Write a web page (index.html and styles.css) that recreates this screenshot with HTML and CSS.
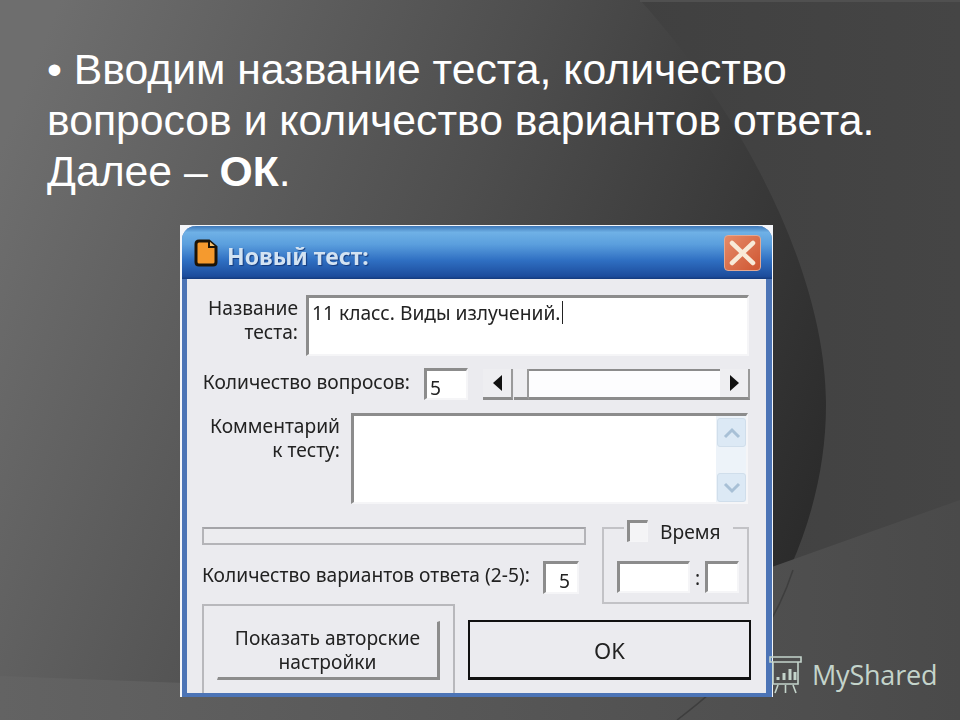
FILE: index.html
```html
<!DOCTYPE html>
<html lang="ru">
<head>
    <meta charset="UTF-8">
    <title>Новый тест</title>
    <link rel="stylesheet" href="styles.css">
</head>
<body>
    <div class="slide">
        <!-- фон слайда -->
        <svg class="slide-bg" width="960" height="720" viewBox="0 0 960 720">
            <defs>
                <linearGradient id="bg-left" gradientUnits="userSpaceOnUse" x1="0" y1="150" x2="830" y2="480">
                    <stop offset="0" stop-color="#6e6e6e"/>
                    <stop offset="0.5" stop-color="#4e4e4e"/>
                    <stop offset="1" stop-color="#2b2b2b"/>
                </linearGradient>
                <linearGradient id="bg-right" x1="0" y1="0" x2="1" y2="0">
                    <stop offset="0" stop-color="#373737"/>
                    <stop offset="1" stop-color="#454545"/>
                </linearGradient>
                <linearGradient id="bg-low" x1="0" y1="0" x2="1" y2="0">
                    <stop offset="0" stop-color="#636363"/>
                    <stop offset="1" stop-color="#4a4a4a"/>
                </linearGradient>
            </defs>
            <rect width="960" height="720" fill="url(#bg-right)"/>
            <path d="M640 0C740 110 825 270 826 402C827 520 770 640 677 720H0V0Z" fill="url(#bg-left)"/>
            <path d="M0 676L420 692L960 500V720H0Z" fill="url(#bg-low)"/>
            <path d="M793 570C770 640 730 680 677 720" fill="none" stroke="#3e3e3e" stroke-width="1.5"/>
            <rect x="640" width="320" height="2" fill="#505050"/>
        </svg>

        <p class="slide-text">• Вводим название теста, количество<br>вопросов и количество вариантов ответа.<br>Далее – <b>ОК</b>.</p>

        <div class="shot">
            <div class="window">
                <div class="titlebar">
                    <svg class="doc-icon" width="24" height="28" viewBox="0 0 24 28">
                        <path d="M5 2H15L22 8V23Q22 26 19 26H5Q2 26 2 23V5Q2 2 5 2Z" fill="#f59a2e" stroke="#1c1408" stroke-width="3"/>
                        <path d="M15 2V8H22" fill="#f8c26e" stroke="#1c1408" stroke-width="2"/>
                    </svg>
                    <span class="title">Новый тест:</span>
                    <div class="close-btn">
                        <svg width="27" height="26" viewBox="0 0 27 26">
                            <path d="M3 3L24 23M24 3L3 23" stroke="#f8ead8" stroke-width="4.5" stroke-linecap="round"/>
                        </svg>
                    </div>
                </div>

                <div class="client">
                    <div class="row row-name">
                        <label class="label label-name">Название<br>теста:</label>
                        <div class="field field-name">11 класс. Виды излучений.<span class="caret"></span></div>
                    </div>

                    <div class="row row-count">
                        <label class="label label-count">Количество вопросов:</label>
                        <div class="field field-count">5</div>
                        <div class="hscroll">
                            <div class="hscroll-btn"><span class="arrow-left"></span></div>
                            <div class="hscroll-thumb"></div>
                            <div class="hscroll-track"></div>
                            <div class="hscroll-btn"><span class="arrow-right"></span></div>
                        </div>
                    </div>

                    <div class="row row-comment">
                        <label class="label label-comment">Комментарий<br>к тесту:</label>
                        <div class="field field-comment">
                            <div class="vscroll">
                                <div class="vscroll-btn">
                                    <svg width="20" height="12" viewBox="0 0 20 12"><path d="M3 10L10 3L17 10" fill="none" stroke="#a8c0d6" stroke-width="3"/></svg>
                                </div>
                                <div class="vscroll-btn">
                                    <svg width="20" height="12" viewBox="0 0 20 12"><path d="M3 2L10 9L17 2" fill="none" stroke="#a8c0d6" stroke-width="3"/></svg>
                                </div>
                            </div>
                        </div>
                    </div>

                    <div class="row row-options">
                        <div class="options-left">
                            <div class="progress"></div>
                            <div class="row-variants">
                                <label class="label label-variants">Количество вариантов ответа (2-5):</label>
                                <div class="field field-variants">5</div>
                            </div>
                        </div>
                        <fieldset class="time-group">
                            <legend class="time-legend"><span class="checkbox"></span><span class="time-caption">Время</span></legend>
                            <div class="time-fields">
                                <div class="field field-hours"></div>
                                <span class="colon">:</span>
                                <div class="field field-minutes"></div>
                            </div>
                        </fieldset>
                    </div>

                    <div class="row row-bottom">
                        <div class="author-group">
                            <button class="btn btn-author">Показать авторские настройки</button>
                        </div>
                        <button class="btn btn-ok">OK</button>
                    </div>
                </div>
            </div>
        </div>

        <div class="watermark">
            <svg width="36" height="40" viewBox="0 0 36 40" fill="none" stroke="#c4d4cb" stroke-width="1.6">
                <path d="M2 3H33V8H2ZM5 8V30H30V8"/>
                <path d="M10 31L7 39M17.500 31V39M25 31L28 39"/>
                <path d="M10 26V23M16 26V19M22 26V15M27 26V18" stroke-width="3"/>
            </svg>
            <span>MyShared</span>
        </div>
    </div>
</body>
</html>
```

FILE: styles.css
```css
body { margin: 0; overflow: hidden; font-family: "Liberation Sans", Arial, sans-serif; }

.slide {
    position: relative;
    width: 960px;
    height: 720px;
    overflow: hidden;
    background-color: #4a4a4a;
}

.slide-bg {
    position: absolute;
    top: 0;
    left: 0;
}

.slide-text {
    position: relative;
    margin: 0;
    padding: 44px 0 0 47px;
    height: 149px;
    color: white;
    font-size: 42.7px;
    line-height: 51px;
    white-space: nowrap;
}

/* скриншот окна */
.shot {
    position: relative;
    width: 593px;
    height: 472px;
    box-sizing: border-box;
    margin: 32px 0 0 180px;
    padding: 1px 1px 0 2px;
    background-color: #f4f6fa;
    filter: blur(0.4px);
}

.window {
    height: 100%;
    box-sizing: border-box;
    display: flex;
    flex-direction: column;
    border: solid #4c74b6;
    border-width: 0 6px 4px 5px;
    border-radius: 14px 14px 0 0;
    font-family: "Noto Sans", "Liberation Sans", sans-serif;
    font-size: 19.2px;
    color: #222;
    background-color: #ebebef;
}

.titlebar {
    height: 53px;
    margin: 0 -6px 0 -5px;
    padding: 0 11px 0 12px;
    flex-shrink: 0;
    display: flex;
    align-items: center;
    border-radius: 14px 14px 0 0;
    background: linear-gradient(#3f78b8 0, #6fb1e6 12%, #5a9edd 35%, #2f6fc2 65%, #1c4c9c 95%, #143a7c 100%);
}

.doc-icon {
    flex-shrink: 0;
}

.title {
    margin: 6px 0 0 9px;
    font-weight: bold;
    font-size: 23px;
    color: #d3e3f2;
    text-shadow: 1px 1px 1px #143a7c;
}

.close-btn {
    width: 37px;
    height: 36px;
    box-sizing: border-box;
    margin-left: auto;
    display: flex;
    align-items: center;
    justify-content: center;
    border: 1px solid #e2a892;
    border-radius: 4px;
    background: linear-gradient(135deg, #e58a68, #cf5632);
}

.client {
    flex: 1;
    padding: 16px 15px 0;
    display: flex;
    flex-direction: column;
}

.row {
    display: flex;
    flex-shrink: 0;
}

.label {
    flex-shrink: 0;
    line-height: 24px;
    text-align: right;
    white-space: nowrap;
}

.field {
    position: relative;
    box-sizing: border-box;
    flex-shrink: 0;
    padding-left: 3px;
    background-color: white;
    border: solid #f5f5f7;
    border-width: 3px 2px 2px 3px;
    border-top-color: #8c8c8c;
    border-left-color: #8c8c8c;
}

.label-name {
    width: 96px;
    padding-top: 1px;
}

.field-name {
    width: 443px;
    height: 61px;
    margin-left: 8px;
    line-height: 29px;
}

.caret {
    display: inline-block;
    width: 1px;
    height: 23px;
    margin-left: 2px;
    vertical-align: -4px;
    background-color: #222;
}

.row-count {
    margin-top: 12px;
    align-items: center;
}

.label-count {
    width: 208px;
    padding-bottom: 4px;
}

.field-count {
    width: 44px;
    height: 32px;
    margin-left: 14px;
    line-height: 33px;
}

.hscroll {
    display: flex;
    width: 267px;
    height: 31px;
    margin-left: 15px;
}

.hscroll-btn {
    width: 30px;
    box-sizing: border-box;
    display: flex;
    align-items: center;
    justify-content: center;
    background-color: #eeeef1;
    border-right: 2px solid #9a9a9a;
    border-bottom: 3px solid #8c8c8c;
}

.arrow-left {
    border: solid transparent;
    border-width: 8px 9px 8px 0;
    border-right-color: #111;
}

.arrow-right {
    border: solid transparent;
    border-width: 8px 0 8px 9px;
    border-left-color: #111;
}

.hscroll-thumb {
    width: 15px;
    box-sizing: border-box;
    margin-left: 1px;
    background-color: #eeeef1;
    border-right: 2px solid #9a9a9a;
    border-bottom: 3px solid #8c8c8c;
}

.hscroll-track {
    flex: 1;
    background-color: #fdfdfe;
    border-top: 2px solid #8c8c8c;
    border-bottom: 3px solid #8c8c8c;
}

.row-comment { margin-top: 13px; }

.label-comment {
    width: 138px;
    padding-top: 1px;
}

.field-comment {
    width: 397px;
    height: 91px;
    margin-left: 11px;
    padding-left: 0;
    display: flex;
    justify-content: flex-end;
}

.vscroll {
    width: 30px;
    display: flex;
    flex-direction: column;
    justify-content: space-between;
    padding: 2px 0 0 1px;
    box-sizing: border-box;
    background-color: #edf3f9;
}

.vscroll-btn {
    height: 27px;
    display: flex;
    align-items: center;
    justify-content: center;
    border-radius: 3px;
    background-color: #dce9f5;
    border: 1px solid #d0deeb;
}

.row-options {
    margin-top: 12px;
    height: 88px;
}

.options-left {
    width: 384px;
    padding-top: 11px;
}

.progress {
    height: 18px;
    box-sizing: border-box;
    background-color: #ececef;
    border: 2px solid #b4b4b8;
    border-top-color: #a4a4a8;
}

.row-variants {
    display: flex;
    align-items: center;
    margin-top: 16px;
}

.label-variants {
    width: 333px;
    padding-bottom: 5px;
    text-align: left;
}

.field-variants {
    width: 36px;
    height: 33px;
    margin-left: 8px;
    padding-left: 13px;
    line-height: 34px;
}

.time-group {
    width: 147px;
    height: 88px;
    box-sizing: border-box;
    margin: 0 0 0 16px;
    padding: 21px 0 0 13px;
    border: 2px solid #c2c2c6;
}

.time-legend {
    display: flex;
    align-items: center;
    height: 24px;
    margin-left: 7px;
    padding: 0 12px 0 3px;
}

.checkbox {
    width: 21px;
    height: 22px;
    box-sizing: border-box;
    margin: 6px 12px 0 0;
    background-color: #f4f4f6;
    border: solid #f5f5f7;
    border-width: 3px 1px 1px 3px;
    border-top-color: #8c8c8c;
    border-left-color: #8c8c8c;
}

.time-caption { margin-top: 6px; }

.time-fields {
    display: flex;
    align-items: center;
}

.field-hours { width: 73px; height: 32px; }

.colon { width: 15px; text-align: center; }

.field-minutes { width: 34px; height: 32px; }

.row-bottom {
    flex: 1;
    align-items: flex-start;
}

.author-group {
    width: 253px;
    height: 89px;
    box-sizing: border-box;
    padding: 15px 0 0 13px;
    border: solid #b8b8bc;
    border-width: 2px 2px 0;
}

.btn {
    font: inherit;
    color: #222;
    background-color: #ebebef;
    cursor: pointer;
}

.btn-author {
    width: 223px;
    height: 59px;
    padding: 0 8px;
    line-height: 24px;
    border: solid #ebebef;
    border-width: 1px 3px 3px 1px;
    border-right-color: #8c8c8c;
    border-bottom-color: #8c8c8c;
}

.btn-ok {
    width: 283px;
    height: 60px;
    margin: 16px 0 0 13px;
    border: 2px solid #111;
    border-bottom-width: 3px;
    font-size: 22px;
}

.watermark {
    position: absolute;
    left: 768px;
    top: 654px;
    display: flex;
    align-items: center;
    gap: 8px;
    font-family: "Open Sans", sans-serif;
    font-size: 27px;
    letter-spacing: -0.2px;
    color: #c4d4cb;
}
```
